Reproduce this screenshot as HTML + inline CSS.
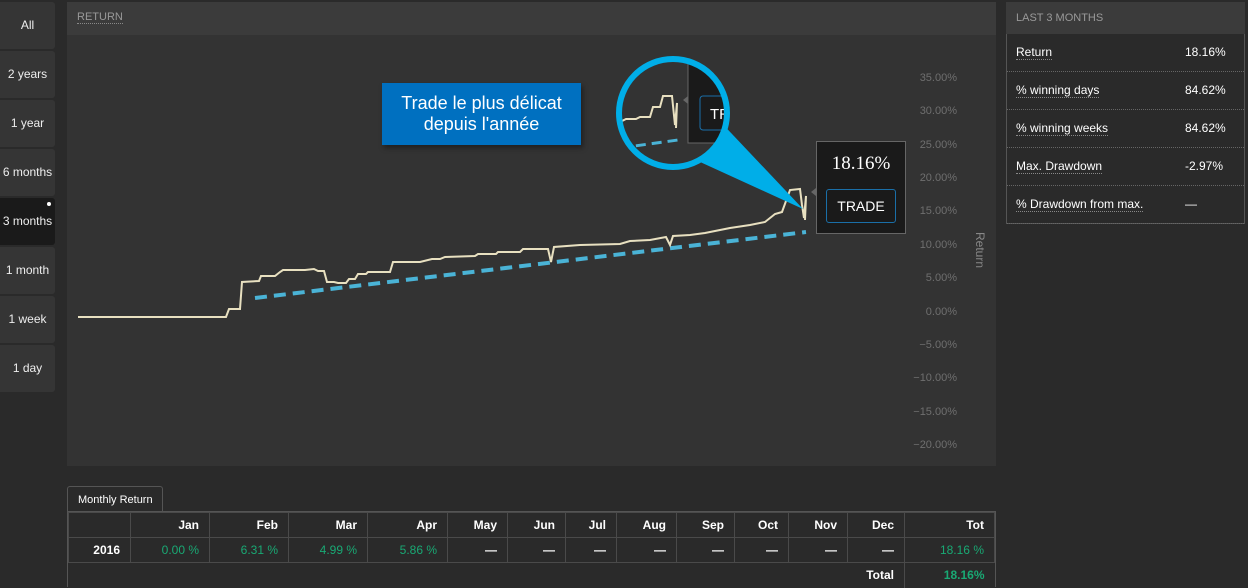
<!DOCTYPE html>
<html><head><meta charset="utf-8"><style>
*{margin:0;padding:0;box-sizing:border-box}
body{width:1248px;height:587px;background:#2a2a2a;font-family:"Liberation Sans",sans-serif;position:relative;overflow:hidden;color:#fff}
.btn{position:absolute;left:0;width:55px;height:47px;background:#353535;border-radius:0 3px 3px 0;font-size:12px;text-align:center;line-height:47px;color:#eee}
.btn.act{background:#1a1a1a}
.abs{position:absolute}
table{border-collapse:collapse;font-size:12px}
td{border:1px solid #4a4a4a;text-align:right;padding:0 10px;height:25px}
.g{color:#19a974}
</style></head><body>
<div class="btn" style="top:2px">All</div>
<div class="btn" style="top:51px">2 years</div>
<div class="btn" style="top:100px">1 year</div>
<div class="btn" style="top:149px">6 months</div>
<div class="btn act" style="top:198px">3 months<span style="position:absolute;left:47px;top:4px;width:4px;height:4px;border-radius:50%;background:#fff"></span></div>
<div class="btn" style="top:247px">1 month</div>
<div class="btn" style="top:296px">1 week</div>
<div class="btn" style="top:345px">1 day</div>

<div class="abs" style="left:67px;top:2px;width:929px;height:464px;background:#333"></div>
<div class="abs" style="left:67px;top:2px;width:929px;height:33px;background:#3b3b3b"></div>
<div class="abs" style="left:77px;top:11px;font-size:11px;color:#999;border-bottom:1px dotted #888;line-height:12px">RETURN</div>

<svg class="abs" style="left:0;top:0" width="1000" height="470">
<g font-family="Liberation Sans" font-size="11" fill="#6f6f6f" text-anchor="end">
<text x="957" y="81">35.00%</text><text x="957" y="114">30.00%</text><text x="957" y="148">25.00%</text><text x="957" y="181">20.00%</text><text x="957" y="214">15.00%</text><text x="957" y="248">10.00%</text><text x="957" y="281">5.00%</text><text x="957" y="315">0.00%</text><text x="957" y="348">−5.00%</text><text x="957" y="381">−10.00%</text><text x="957" y="415">−15.00%</text><text x="957" y="448">−20.00%</text>
</g>
<text x="976" y="250" font-family="Liberation Sans" font-size="12" fill="#888" transform="rotate(90 976 250)" text-anchor="middle">Return</text>
<line x1="255" y1="298" x2="806" y2="232" stroke="#4ab3d6" stroke-width="4" stroke-dasharray="12 7"/>
<polyline fill="none" stroke="#e8e0c0" stroke-width="2" points="78,317 226,317 229,309 240,309 242,282 259,281 261,276 275,276 280,272 283,270 305,270 314,269 318,271 324,271 327,282 334,282 338,283 346,283 349,279 355,279 358,274 366,274 368,272 390,272 393,262 420,262 432,259 440,259 445,257 475,256 478,254 496,254 498,252 520,252 523,249 548,249 551,262 554,247 580,245 620,244 630,241 650,240 666,237 670,245 673,236 690,235 705,233 715,231 730,228 750,225 765,222 775,214 782,212 790,190 800,189 802,205 804,218 806,196 805,220"/>
<polygon points="687,156 715,116 803,209" fill="#00aee8"/>
<defs><clipPath id="c"><circle cx="673" cy="113" r="54"/></clipPath></defs>
<circle cx="673" cy="113" r="54" fill="#333"/>
<g clip-path="url(#c)">
<rect x="688" y="60" width="60" height="83" fill="#1a1a1a" stroke="#666"/>
<rect x="700" y="96" width="50" height="34" rx="3" fill="none" stroke="#1a6fa8"/>
<text x="710" y="119" font-family="Liberation Sans" font-size="15" fill="#fff">TRADE</text>
<polygon points="683,100 688,96 688,104" fill="#666"/>
<line x1="620" y1="148" x2="678" y2="140" stroke="#4ab3d6" stroke-width="3" stroke-dasharray="10 6"/>
<polyline fill="none" stroke="#e8e0c0" stroke-width="2" points="615,123 620,122 626,119 636,119 640,117 650,117 653,107 660,107 663,96 672,96 675,125 677,103 676,128"/>
</g>
<circle cx="673" cy="113" r="54" fill="none" stroke="#00aee8" stroke-width="6"/>
<polygon points="811,192 816,188 816,196" fill="#666"/>
</svg>

<div class="abs" style="left:382px;top:83px;width:199px;height:62px;background:#0070c0;box-shadow:2px 3px 5px rgba(0,0,0,.4);text-align:center;font-size:18px;line-height:21px;padding-top:10px">Trade le plus délicat<br>depuis l'année</div>

<div class="abs" style="left:816px;top:141px;width:90px;height:93px;background:#1a1a1a;border:1px solid #666"></div>
<div class="abs" style="left:816px;top:153px;width:90px;text-align:center;font-family:'Liberation Serif',serif;font-size:19px">18.16%</div>
<div class="abs" style="left:826px;top:189px;width:70px;height:34px;border:1px solid #1a6fa8;border-radius:3px;text-align:center;line-height:32px;font-size:14px">TRADE</div>

<div class="abs" style="left:1006px;top:2px;width:239px;height:222px;background:#2a2a2a;border:1px solid #555;border-top:none"></div>
<div class="abs" style="left:1006px;top:2px;width:239px;height:32px;background:#3b3b3b;font-size:11px;color:#999;padding:10px 0 0 10px">LAST 3 MONTHS</div>
<div class="abs" style="left:1007px;top:34px;width:237px;font-size:12px">
<div style="height:38px;border-bottom:1px dotted #666;position:relative"><span style="position:absolute;left:9px;top:11px;border-bottom:1px dotted #888">Return</span><span style="position:absolute;left:178px;top:11px">18.16%</span></div>
<div style="height:38px;border-bottom:1px dotted #666;position:relative"><span style="position:absolute;left:9px;top:11px;border-bottom:1px dotted #888">% winning days</span><span style="position:absolute;left:178px;top:11px">84.62%</span></div>
<div style="height:38px;border-bottom:1px dotted #666;position:relative"><span style="position:absolute;left:9px;top:11px;border-bottom:1px dotted #888">% winning weeks</span><span style="position:absolute;left:178px;top:11px">84.62%</span></div>
<div style="height:38px;border-bottom:1px dotted #666;position:relative"><span style="position:absolute;left:9px;top:11px;border-bottom:1px dotted #888">Max. Drawdown</span><span style="position:absolute;left:178px;top:11px">-2.97%</span></div>
<div style="height:38px;border-bottom:1px dotted #666;position:relative"><span style="position:absolute;left:9px;top:11px;border-bottom:1px dotted #888">% Drawdown from max.</span><span style="position:absolute;left:178px;top:11px">—</span></div>
</div>

<div class="abs" style="left:67px;top:486px;width:96px;height:26px;background:#2a2a2a;border:1px solid #555;border-bottom:none;border-radius:3px 3px 0 0;font-size:11px;padding:7px 0 0 10px">Monthly Return</div>
<div class="abs" style="left:67px;top:511px;width:929px;height:76px;border:1px solid #555;border-bottom:none"></div>
<table class="abs" style="left:68px;top:512px;width:927px;font-weight:bold">
<tr><td style="width:62px"></td><td style="width:79px">Jan</td><td style="width:79px">Feb</td><td style="width:79px">Mar</td><td style="width:80px">Apr</td><td style="width:60px">May</td><td style="width:58px">Jun</td><td style="width:51px">Jul</td><td style="width:60px">Aug</td><td style="width:58px">Sep</td><td style="width:54px">Oct</td><td style="width:59px">Nov</td><td style="width:57px">Dec</td><td>Tot</td></tr>
<tr style="border-bottom:1px dotted #888"><td>2016</td><td class="g" style="font-weight:normal">0.00 %</td><td class="g" style="font-weight:normal">6.31 %</td><td class="g" style="font-weight:normal">4.99 %</td><td class="g" style="font-weight:normal">5.86 %</td><td>—</td><td>—</td><td>—</td><td>—</td><td>—</td><td>—</td><td>—</td><td>—</td><td class="g" style="font-weight:normal">18.16 %</td></tr>
<tr><td colspan="13" style="border:none;border-right:1px solid #4a4a4a">Total</td><td class="g" style="border:none">18.16%</td></tr>
</table>
</body></html>
